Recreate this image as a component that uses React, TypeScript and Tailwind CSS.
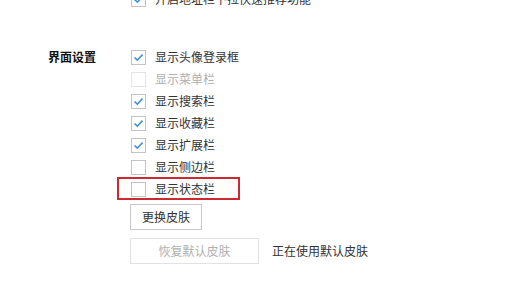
import React from "react";

const font = { fontFamily: '"Noto Sans CJK SC", "Noto Sans", sans-serif' };

function Check({ checked, disabled }: { checked?: boolean; disabled?: boolean }) {
  return (
    <div
      className={`w-[15px] h-[15px] border bg-white flex items-center justify-center shrink-0 ${
        disabled ? "border-[#e4e4e4]" : "border-[#c4c4c4]"
      }`}
    >
      {checked && (
        <svg width="11" height="9" viewBox="0 0 11 9">
          <path d="M1.5 4.5 L4.3 7.2 L9.5 1.6" fill="none" stroke="#3f8fe0" strokeWidth="1.6" />
        </svg>
      )}
    </div>
  );
}

function Row({
  label,
  checked,
  disabled,
  children,
}: {
  label: string;
  checked?: boolean;
  disabled?: boolean;
  children?: React.ReactNode;
}) {
  return (
    <div className="relative h-[22px] flex items-center gap-[9px]">
      {children}
      <Check checked={checked} disabled={disabled} />
      <span className={`text-[12px] leading-none ${disabled ? "text-[#b0b0b0]" : "text-[#333]"}`}>{label}</span>
    </div>
  );
}

export default function App() {
  return (
    <div className="w-[527px] h-[293px] bg-white overflow-hidden" style={font}>
      <div className="pl-[131px] -mt-[12px]">
        <Row label="开启地址栏下拉快速推荐功能" checked />
      </div>
      <div className="mt-[36px] flex">
        <div className="w-[131px] pl-[48px] h-[22px] flex items-center">
          <span className="text-[12px] font-bold text-[#111] leading-none">界面设置</span>
        </div>
        <div className="flex flex-col">
          <Row label="显示头像登录框" checked />
          <Row label="显示菜单栏" disabled />
          <Row label="显示搜索栏" checked />
          <Row label="显示收藏栏" checked />
          <Row label="显示扩展栏" checked />
          <Row label="显示侧边栏" />
          <Row label="显示状态栏">
            <div className="absolute left-[-14px] top-[-1px] w-[123px] h-[23px] border-2 border-[#cc2a30]" />
          </Row>
          <button className="mt-[4px] -ml-[1px] w-[72px] h-[26px] border border-[#c8c8c8] bg-white text-[12px] text-[#333]">
            更换皮肤
          </button>
          <div className="mt-[8px] -ml-[1px] flex items-center gap-[13px]">
            <button className="w-[129px] h-[26px] border border-[#e2e2e2] bg-white text-[12px] text-[#b0b0b0]">
              恢复默认皮肤
            </button>
            <span className="text-[12px] text-[#333]">正在使用默认皮肤</span>
          </div>
        </div>
      </div>
    </div>
  );
}
